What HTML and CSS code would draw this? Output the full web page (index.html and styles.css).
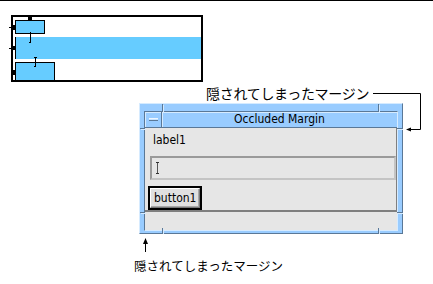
FILE: index.html
```html
<!DOCTYPE html>
<html lang="ja">
<head>
  <meta charset="UTF-8" />
  <title>Occluded Margin</title>
  <link rel="stylesheet" href="styles.css">
</head>
<body>
  <div class="figure">
    <!-- layout diagram and callout lines -->
    <svg class="drawing" width="433" height="284" viewBox="0 0 433 284">
      <rect x="12" y="16" width="190" height="65" fill="#fff" stroke="#000" stroke-width="2"/>
      <rect x="15.5" y="20.5" width="29" height="13" fill="#66ccff" stroke="#000"/>
      <rect x="15" y="37" width="186" height="22" fill="#66ccff"/>
      <line x1="15.5" y1="37" x2="15.5" y2="59" stroke="#000"/>
      <rect x="15.5" y="62.5" width="39" height="18" fill="#66ccff" stroke="#000"/>
      <!-- margin markers -->
      <rect x="28" y="15" width="4" height="5" fill="#000"/>
      <rect x="11" y="25" width="4" height="5" fill="#000"/>
      <rect x="11" y="46" width="4" height="4" fill="#000"/>
      <rect x="11" y="70" width="4" height="5" fill="#000"/>
      <line x1="9" y1="27.5" x2="11" y2="27.5" stroke="#000"/>
      <line x1="9" y1="48.5" x2="11" y2="48.5" stroke="#000"/>
      <path d="M30.5 32v10M28 33.5h2M29 42.5h2" stroke="#000" fill="none"/>
      <path d="M35.5 57v9M34 66.5h2M34 57.5h3" stroke="#000" fill="none"/>
      <!-- callouts -->
      <polyline points="373,93.5 420.5,93.5 420.5,129.5 410,129.5" fill="none" stroke="#000"/>
      <polygon points="406,129.5 411,127.5 411,131.5" fill="#000"/>
      <line x1="145.5" y1="241" x2="145.5" y2="252" stroke="#000"/>
      <polygon points="145.5,238 143,244 148,244" fill="#000"/>
    </svg>

    <div class="callout callout-top">隠されてしまったマージン</div>
    <div class="callout callout-bottom">隠されてしまったマージン</div>

    <div class="window">
      <span class="notch notch-t1"></span>
      <span class="notch notch-t2"></span>
      <span class="notch notch-b1"></span>
      <span class="notch notch-b2"></span>
      <span class="notch notch-l1"></span>
      <span class="notch notch-l2"></span>
      <span class="notch notch-r1"></span>
      <span class="notch notch-r2"></span>
      <div class="inner">
        <div class="titlebar">
          <div class="menu-btn"><span class="menu-icon"></span></div>
          <div class="title">Occluded Margin</div>
        </div>
        <div class="content">
          <div class="label">label1</div>
          <div class="field"><span class="caret"></span></div>
          <div class="button-ring"><div class="button">button1</div></div>
        </div>
        <div class="footer"></div>
      </div>
    </div>
  </div>
</body>
</html>
```

FILE: styles.css
```css
body {
  margin: 0;
  background: #fff;
  font-family: "DejaVu Sans Condensed", "DejaVu Sans", sans-serif;
}
.figure {
  position: relative;
  width: 433px;
  height: 284px;
  border-top: 1px solid #000;
  box-sizing: border-box;
  overflow: hidden;
}
.drawing {
  position: absolute;
  top: -1px;
  left: 0;
}
.callout {
  position: absolute;
  font-family: "Noto Sans CJK JP", sans-serif;
  color: #000;
  white-space: nowrap;
}
.callout-top { left: 206px; top: 83px; font-size: 14px; line-height: 18px; letter-spacing: -0.3px; }
.callout-bottom { left: 134px; top: 256px; font-size: 12.5px; line-height: 18px; }

/* Motif-like window */
.window {
  position: absolute;
  left: 139px;
  top: 102px;
  width: 264px;
  height: 131px;
  box-sizing: border-box;
  background: #99ccff;
  border: 1px solid;
  border-color: #d6ebff #5a7897 #5a7897 #d6ebff;
  padding: 7px 4px 4px 4px;
}
.inner {
  display: flex;
  flex-direction: column;
  height: 100%;
  border: 1px solid;
  border-color: #5a7897 #d6ebff #d6ebff #5a7897;
  background: #e6e6e6;
}
.notch {
  position: absolute;
  background: #5a7897;
  box-shadow: 1px 1px 0 #d6ebff;
}
.notch-t1, .notch-t2 { top: 0; width: 1px; height: 8px; }
.notch-b1, .notch-b2 { bottom: 0; width: 1px; height: 5px; }
.notch-t1, .notch-b1 { left: 22px; }
.notch-t2, .notch-b2 { left: 238px; }
.notch-l1, .notch-l2 { left: 0; width: 5px; height: 1px; }
.notch-r1, .notch-r2 { right: 0; width: 5px; height: 1px; }
.notch-l1, .notch-r1 { top: 24px; }
.notch-l2, .notch-r2 { top: 108px; }

.titlebar {
  display: flex;
  height: 16px;
  flex: none;
  background: #99ccff;
  border-bottom: 1px solid #5a7897;
  box-sizing: border-box;
}
.menu-btn {
  width: 16px;
  display: flex;
  align-items: center;
  justify-content: center;
  border-right: 1px solid #5a7897;
  box-shadow: inset 1px 1px 0 #d6ebff;
}
.menu-icon {
  width: 9px;
  height: 3px;
  background: #c8e4ff;
  border-bottom: 1px solid #5a7897;
  border-top: 1px solid #eef7ff;
  box-sizing: border-box;
}
.title {
  flex: 1;
  text-align: center;
  font-size: 12px;
  line-height: 15px;
  color: #000;
  box-shadow: inset 1px 1px 0 #d6ebff;
}

.content {
  height: 84px;
  flex: none;
  box-sizing: border-box;
  border-bottom: 2px solid #7f7f7f;
  border-right: 1px solid #7f7f7f;
  padding: 4px 0 0 3px;
  display: flex;
  flex-direction: column;
  align-items: flex-start;
}
.label {
  font-size: 12px;
  line-height: 16px;
  margin-left: 5px;
  color: #000;
}
.field {
  margin: 8px 0 0 2px;
  width: 246px;
  height: 26px;
  box-sizing: border-box;
  border: 2px solid;
  border-color: #9a9a9a #c4c4c4 #c4c4c4 #9a9a9a;
  position: relative;
}
.caret {
  position: absolute;
  left: 4px;
  top: 4px;
  width: 3px;
  height: 12px;
  border-top: 1px solid #333;
  border-bottom: 1px solid #333;
  box-sizing: border-box;
  background: linear-gradient(#555, #555) center / 1px 100% no-repeat;
}
.button-ring {
  margin: 6px 0 0 0;
  border: 2px solid #000;
}
.button {
  height: 18px;
  padding: 0 3px;
  font-size: 12px;
  line-height: 18px;
  background: #e0e0e0;
  border: 1px solid;
  border-color: #fff #7a7a7a #7a7a7a #fff;
  box-shadow: inset -1px -1px 0 #a8a8a8;
  color: #000;
}
.footer {
  flex: 1;
  background: #e6e6e6;
}
```
